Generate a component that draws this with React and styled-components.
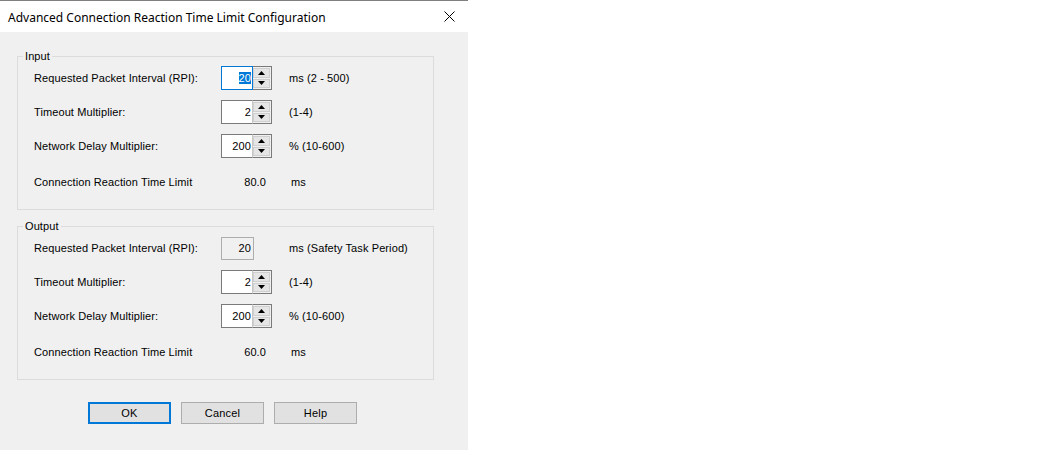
import React from 'react';
import styled, { createGlobalStyle } from 'styled-components';

const GlobalStyle = createGlobalStyle`
  body {
    margin: 0;
    background: #ffffff;
  }
`;

const Dialog = styled.div`
  width: 468px;
  height: 449px;
  background: #f0f0f0;
  border-top: 1px solid #808080;
  display: flex;
  flex-direction: column;
  font-family: "Liberation Sans", Arial, sans-serif;
  font-size: 11px;
  letter-spacing: 0.1px;
  color: #000;
`;

const TitleBar = styled.div`
  height: 31px;
  background: #ffffff;
  display: flex;
  align-items: center;
  justify-content: space-between;
  padding: 0 13px 0 8px;
`;

const Title = styled.div`
  font-family: "Noto Sans", sans-serif;
  font-size: 12px;
  letter-spacing: 0;
  color: #000;
  padding-top: 1px;
`;

const Body = styled.div`
  display: flex;
  flex-direction: column;
  gap: 16px;
  padding: 24px 34px 0 17px;
`;

const GroupBox = styled.div`
  position: relative;
  border: 1px solid #dcdcdc;
  padding: 9px 0 15px 16px;
  display: flex;
  flex-direction: column;
  gap: 10px;
`;

const Caption = styled.span`
  position: absolute;
  top: -7px;
  left: 5px;
  padding: 0 2px;
  line-height: 13px;
  background: #f0f0f0;
`;

const Row = styled.div`
  display: grid;
  grid-template-columns: 170px 51px auto;
  column-gap: 17px;
  align-items: center;
  height: 24px;
  margin-top: ${(p) => (p.$result ? '2px' : '0')};
`;

const Label = styled.span`
  white-space: nowrap;
`;

const Unit = styled.span`
  white-space: nowrap;
  padding-left: ${(p) => p.$shift || 0}px;
`;

const Value = styled.span`
  text-align: right;
  padding-right: 6px;
`;

const SpinBox = styled.div`
  display: flex;
  height: 24px;
  width: 51px;
`;

const Edit = styled.div`
  flex: 1;
  background: #ffffff;
  border: 1px solid ${(p) => (p.$focused ? '#0078d7' : '#7a7a7a')};
  border-right-color: ${(p) => (p.$focused ? '#0078d7' : '#c8c8c8')};
  display: flex;
  align-items: center;
  justify-content: flex-end;
  padding-right: 1px;
`;

const Selected = styled.span`
  background: #0078d7;
  color: #fff;
  line-height: 12px;
`;

const Spinner = styled.div`
  width: 17px;
  display: flex;
  flex-direction: column;
  border: 1px solid #7a7a7a;
  border-left: none;
  background: #f0f0f0;
  padding: 1px 1px 1px 0;
  gap: 1px;
`;

const SpinButton = styled.div`
  flex: 1;
  background: #e5e5e5;
  border: 1px solid #cfcfcf;
  display: flex;
  align-items: center;
  justify-content: center;
`;

const ReadOnly = styled.div`
  width: 33px;
  height: 23px;
  border: 1px solid #adadad;
  background: #f0f0f0;
  display: flex;
  align-items: center;
  justify-content: flex-end;
  padding-right: 2px;
  box-sizing: border-box;
`;

const ButtonRow = styled.div`
  display: flex;
  gap: 10px;
  margin: 6px 0 0 71px;
`;

const Button = styled.button`
  width: 83px;
  height: 22px;
  padding: 0;
  font: inherit;
  letter-spacing: 0.2px;
  color: #000;
  background: #e1e1e1;
  border: 1px solid ${(p) => (p.$default ? '#0078d7' : '#adadad')};
  box-shadow: ${(p) => (p.$default ? 'inset 0 0 0 1px #0078d7' : 'none')};
`;

function Arrow({ up }) {
  return (
    <svg width="7" height="4" viewBox="0 0 7 4">
      <path d={up ? 'M0 4 L3.5 0 L7 4 Z' : 'M0 0 L7 0 L3.5 4 Z'} fill="#000" />
    </svg>
  );
}

function Spin({ value, focused }) {
  return (
    <SpinBox>
      <Edit $focused={focused}>
        {focused ? <Selected>{value}</Selected> : value}
      </Edit>
      <Spinner>
        <SpinButton><Arrow up /></SpinButton>
        <SpinButton><Arrow /></SpinButton>
      </Spinner>
    </SpinBox>
  );
}

function Group({ title, rpi, rpiUnit, rpiReadOnly, limit }) {
  return (
    <GroupBox>
      <Caption>{title}</Caption>
      <Row>
        <Label>Requested Packet Interval (RPI):</Label>
        {rpiReadOnly ? <ReadOnly>{rpi}</ReadOnly> : <Spin value={rpi} focused />}
        <Unit>{rpiUnit}</Unit>
      </Row>
      <Row>
        <Label>Timeout Multiplier:</Label>
        <Spin value="2" />
        <Unit>(1-4)</Unit>
      </Row>
      <Row>
        <Label>Network Delay Multiplier:</Label>
        <Spin value="200" />
        <Unit>% (10-600)</Unit>
      </Row>
      <Row $result>
        <Label>Connection Reaction Time Limit</Label>
        <Value>{limit}</Value>
        <Unit $shift={2}>ms</Unit>
      </Row>
    </GroupBox>
  );
}

export default function App() {
  return (
    <>
      <GlobalStyle />
      <Dialog>
        <TitleBar>
          <Title>Advanced Connection Reaction Time Limit Configuration</Title>
          <svg width="11" height="11" viewBox="0 0 11 11">
            <path d="M0.5 0.5 L10.5 10.5 M10.5 0.5 L0.5 10.5" stroke="#000" strokeWidth="1" />
          </svg>
        </TitleBar>
        <Body>
          <Group title="Input" rpi="20" rpiUnit="ms (2 - 500)" limit="80.0" />
          <Group title="Output" rpi="20" rpiUnit="ms (Safety Task Period)" rpiReadOnly limit="60.0" />
          <ButtonRow>
            <Button $default>OK</Button>
            <Button>Cancel</Button>
            <Button>Help</Button>
          </ButtonRow>
        </Body>
      </Dialog>
    </>
  );
}
